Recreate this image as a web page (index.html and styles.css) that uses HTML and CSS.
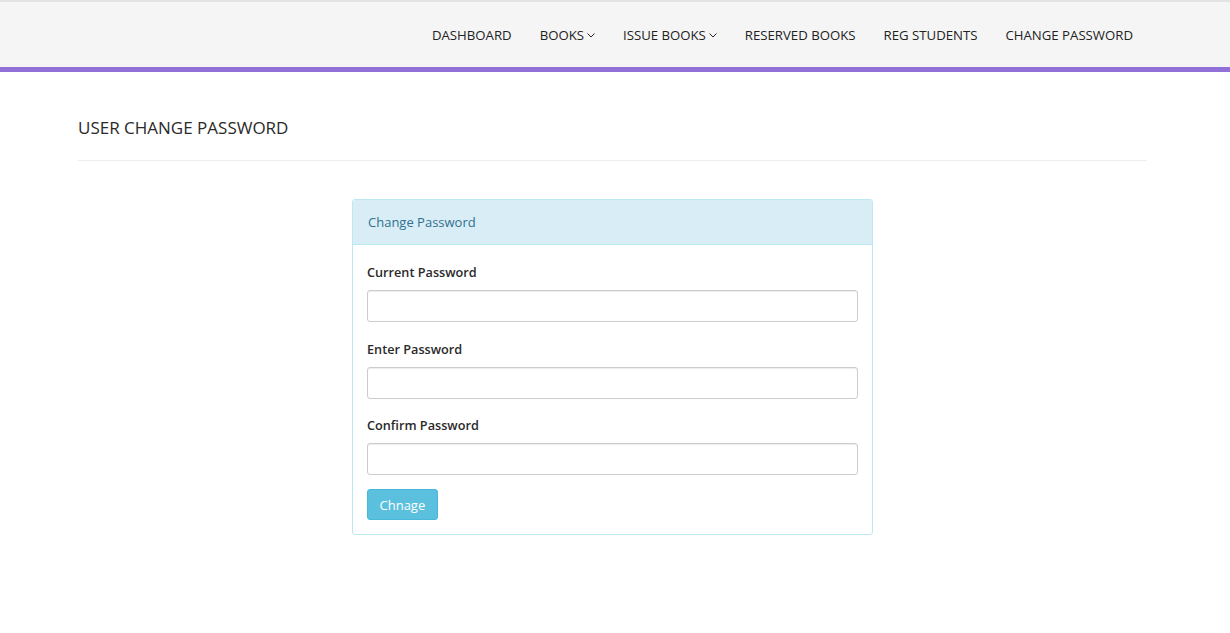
FILE: index.html
```html
<!DOCTYPE html>
<html lang="en">
<head>
<meta charset="utf-8">
<title>User Change Password</title>
<link rel="stylesheet" href="styles.css">
</head>
<body>
<header class="navbar">
  <nav class="nav">
    <a class="nav-link" href="#">DASHBOARD</a>
    <a class="nav-link" href="#">BOOKS <svg class="caret" viewBox="0 0 8 5" width="8" height="5"><path d="M0.5 0.5 L4 4 L7.5 0.5" fill="none" stroke="currentColor" stroke-width="1"/></svg></a>
    <a class="nav-link" href="#">ISSUE BOOKS <svg class="caret" viewBox="0 0 8 5" width="8" height="5"><path d="M0.5 0.5 L4 4 L7.5 0.5" fill="none" stroke="currentColor" stroke-width="1"/></svg></a>
    <a class="nav-link" href="#">RESERVED BOOKS</a>
    <a class="nav-link" href="#">REG STUDENTS</a>
    <a class="nav-link" href="#">CHANGE PASSWORD</a>
  </nav>
</header>

<main class="container">
  <h4 class="page-head">USER CHANGE PASSWORD</h4>
  <hr class="divider">

  <section class="panel">
    <div class="panel-heading">Change Password</div>
    <form class="panel-body">
      <div class="form-group">
        <label class="label">Current Password</label>
        <input class="input" type="password">
      </div>
      <div class="form-group">
        <label class="label">Enter Password</label>
        <input class="input" type="password">
      </div>
      <div class="form-group">
        <label class="label">Confirm Password</label>
        <input class="input" type="password">
      </div>
      <button class="btn" type="button">Chnage</button>
    </form>
  </section>
</main>
</body>
</html>
```

FILE: styles.css
```css
* {
  box-sizing: border-box;
}

body {
  margin: 0;
  font-family: "Open Sans", "Noto Sans", sans-serif;
  font-size: 13px;
  color: #333;
  background: #fff;
}

/* top navigation */
.navbar {
  height: 72px;
  background: #f5f5f5;
  border-top: 2px solid #e3e3e3;
  border-bottom: 5px solid #9170d8;
  display: flex;
  justify-content: flex-end;
  align-items: center;
  padding-right: 97px;
}

.nav {
  display: flex;
  gap: 28px;
  align-items: center;
}

.nav-link {
  color: #222;
  text-decoration: none;
  font-size: 13.2px;
  display: flex;
  align-items: center;
  gap: 3px;
}

.caret {
  margin-top: 1px;
}

/* page content */
.container {
  margin-left: 78px;
  width: 1069px;
}

.page-head {
  margin: 0;
  padding-top: 45px;
  font-size: 17px;
  font-weight: 400;
  line-height: 22px;
  color: #2a2a2a;
}

.divider {
  margin: 21px 0 38px;
  border: 0;
  border-top: 1px solid #eee;
}

.panel {
  width: 521px;
  margin-left: 274px;
  border: 1px solid #bce8f1;
  border-radius: 3px;
  background: #fff;
}

.panel-heading {
  height: 45px;
  padding: 0 15px;
  display: flex;
  align-items: center;
  background: #d9edf7;
  color: #31708f;
  border-bottom: 1px solid #bce8f1;
  border-radius: 2px 2px 0 0;
}

.panel-body {
  padding: 17px 14px 14px;
  margin: 0;
}

.form-group {
  margin-bottom: 17px;
  display: flex;
  flex-direction: column;
}

.form-group:nth-child(2) {
  margin-bottom: 16px;
}

.label {
  font-size: 12.7px;
  font-weight: 600;
  line-height: 20px;
  margin-bottom: 8px;
  color: #2a2a2a;
}

.input {
  height: 32px;
  border: 1px solid #ccc;
  border-radius: 3px;
  background: #fff;
  box-shadow: inset 0 1px 1px rgba(0, 0, 0, 0.075);
}

.btn {
  align-self: flex-start;
  margin-top: -3px;
  height: 31px;
  padding: 0 11.5px;
  background: #5bc0de;
  border: 1px solid #46b8da;
  border-radius: 3px;
  color: #fff;
  font-family: inherit;
  font-size: 13px;
}
```
